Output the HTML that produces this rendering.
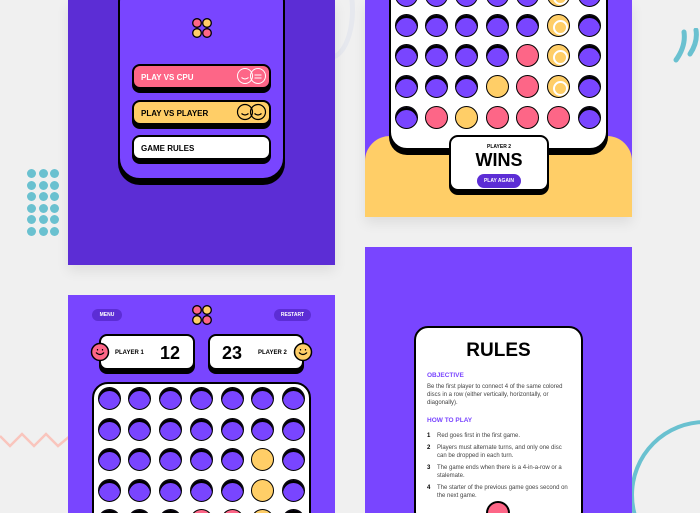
<!DOCTYPE html>
<html style="width:700px;height:513px;overflow:hidden"><head><meta charset="utf-8"><style>
*{margin:0;padding:0;box-sizing:border-box}
body{width:700px;height:513px;overflow:hidden;background:#f0f0f0;position:relative;font-family:"Liberation Sans",sans-serif;font-weight:bold}
.a{position:absolute}
.h{position:absolute;width:23px;height:23px;border-radius:50%;background:#7945ff;border:1.5px solid #000;box-shadow:inset 0 3px 0 #000}
.r{background:#fd6687;box-shadow:none}
.y{background:#ffce67;box-shadow:none}
.w::after{content:"";position:absolute;left:4.5px;top:4.5px;width:11px;height:11px;border:2px solid #fff;border-radius:50%}
.btn{position:absolute;left:132px;width:139px;height:25px;border:2px solid #000;border-radius:8px;box-shadow:0 4px 0 #000;font-size:8px;padding:7px 0 0 7px}
.dot{position:absolute;width:9px;height:9px;border-radius:50%;background:#6ac1d0}
.pill{position:absolute;height:12px;border-radius:6px;background:#5c2dd5;color:#fff;font-size:5px;text-align:center;line-height:12px}
.card{position:absolute;height:36px;background:#fff;border:2px solid #000;border-radius:8px;box-shadow:0 4px 0 #000}
.rt{font-weight:normal;font-size:6px;color:#444;line-height:8px}
</style></head><body>
<div class="a" style="left:305px;top:-40px;width:50px;height:100px;border:5px solid #e6e8ee;border-radius:50%;border-left-color:transparent"></div>
<svg class="a" style="left:670px;top:28px" width="30" height="36"><path d="M14 4q2 14-8 28M26 2q2 12-6 24" fill="none" stroke="#6ac1d0" stroke-width="5" stroke-linecap="round"/></svg>
<div class="a" style="left:630px;top:420px;width:150px;height:150px;border:4px solid #6ac1d0;border-radius:50%"></div>
<svg class="a" style="left:0;top:430px" width="70" height="25"><polyline points="0,6 10,16 22,4 34,16 46,4 58,16 70,6" fill="none" stroke="#f9c5bd" stroke-width="2.5"/></svg>
<div class="dot" style="left:27px;top:169px"></div><div class="dot" style="left:39px;top:169px"></div><div class="dot" style="left:50px;top:169px"></div>
<div class="dot" style="left:27px;top:181px"></div><div class="dot" style="left:39px;top:181px"></div><div class="dot" style="left:50px;top:181px"></div>
<div class="dot" style="left:27px;top:192px"></div><div class="dot" style="left:39px;top:192px"></div><div class="dot" style="left:50px;top:192px"></div>
<div class="dot" style="left:27px;top:204px"></div><div class="dot" style="left:39px;top:204px"></div><div class="dot" style="left:50px;top:204px"></div>
<div class="dot" style="left:27px;top:215px"></div><div class="dot" style="left:39px;top:215px"></div><div class="dot" style="left:50px;top:215px"></div>
<div class="dot" style="left:27px;top:227px"></div><div class="dot" style="left:39px;top:227px"></div><div class="dot" style="left:50px;top:227px"></div>

<div class="a" style="left:68px;top:0;width:267px;height:265px;background:#5c2dd5;box-shadow:0 6px 12px rgba(0,0,0,.08)"></div>
<div class="a" style="left:118px;top:-20px;width:167px;height:200px;background:#7945ff;border:2.5px solid #000;border-radius:22px;box-shadow:0 5px 0 #000"></div>
<svg class="a" style="left:191px;top:17px" width="22" height="22"><g stroke="#000" stroke-width="1.3"><circle cx="6" cy="6" r="4.3" fill="#fd6687"/><circle cx="16" cy="6" r="4.3" fill="#ffce67"/><circle cx="6" cy="16" r="4.3" fill="#ffce67"/><circle cx="16" cy="16" r="4.3" fill="#fd6687"/></g></svg>
<div class="btn" style="top:64px;background:#fd6687;color:#fff">PLAY VS CPU</div>
<svg class="a" style="left:236px;top:67px" width="32" height="18"><g fill="none" stroke="#fff" stroke-width="1"><circle cx="9" cy="9" r="7.5"/><circle cx="22" cy="9" r="7.5"/><path d="M5.5 10.5q3.5 3 7 0M18.5 8h7M18.5 11h7"/></g></svg>
<div class="btn" style="top:100px;background:#ffce67;color:#000">PLAY VS PLAYER</div>
<svg class="a" style="left:236px;top:103px" width="32" height="18"><g fill="none" stroke="#000" stroke-width="1.2"><circle cx="9" cy="9" r="7.5"/><circle cx="22" cy="9" r="7.5"/><path d="M5.5 10.5q3.5 3 7 0M18.5 10.5q3.5 3 7 0"/></g></svg>
<div class="btn" style="top:135px;background:#fff;color:#000">GAME RULES</div>

<div class="a" style="left:365px;top:0;width:267px;height:217px;background:#7945ff;overflow:hidden;box-shadow:0 6px 12px rgba(0,0,0,.08)">
 <div class="a" style="left:0;top:136px;width:267px;height:100px;background:#ffce67;border-radius:25px 25px 0 0"></div>
</div>
<div class="a" style="left:389px;top:-20px;width:219px;height:170px;background:#fff;border:2.5px solid #000;border-radius:18px;box-shadow:0 5px 0 #000"></div>
<div class="h" style="left:395px;top:-16px"></div><div class="h" style="left:425px;top:-16px"></div><div class="h" style="left:455px;top:-16px"></div><div class="h" style="left:486px;top:-16px"></div><div class="h" style="left:516px;top:-16px"></div><div class="h y w" style="left:547px;top:-16px"></div><div class="h" style="left:578px;top:-16px"></div>
<div class="h" style="left:395px;top:14px"></div><div class="h" style="left:425px;top:14px"></div><div class="h" style="left:455px;top:14px"></div><div class="h" style="left:486px;top:14px"></div><div class="h" style="left:516px;top:14px"></div><div class="h y w" style="left:547px;top:14px"></div><div class="h" style="left:578px;top:14px"></div>
<div class="h" style="left:395px;top:44px"></div><div class="h" style="left:425px;top:44px"></div><div class="h" style="left:455px;top:44px"></div><div class="h" style="left:486px;top:44px"></div><div class="h r" style="left:516px;top:44px"></div><div class="h y w" style="left:547px;top:44px"></div><div class="h" style="left:578px;top:44px"></div>
<div class="h" style="left:395px;top:75px"></div><div class="h" style="left:425px;top:75px"></div><div class="h" style="left:455px;top:75px"></div><div class="h y" style="left:486px;top:75px"></div><div class="h r" style="left:516px;top:75px"></div><div class="h y w" style="left:547px;top:75px"></div><div class="h" style="left:578px;top:75px"></div>
<div class="h" style="left:395px;top:106px"></div><div class="h r" style="left:425px;top:106px"></div><div class="h y" style="left:455px;top:106px"></div><div class="h r" style="left:486px;top:106px"></div><div class="h r" style="left:516px;top:106px"></div><div class="h r" style="left:547px;top:106px"></div><div class="h" style="left:578px;top:106px"></div>
<div class="a" style="left:449px;top:135px;width:100px;height:56px;background:#fff;border:2px solid #000;border-radius:9px;box-shadow:0 4px 0 #000;text-align:center">
 <div style="font-size:5px;margin-top:7px">PLAYER 2</div>
 <div style="font-size:18px;line-height:18px;margin-top:1px">WINS</div>
 <div style="display:inline-block;background:#5c2dd5;color:#fff;font-size:5px;border-radius:7px;padding:4px 7px;margin-top:2px">PLAY AGAIN</div>
</div>

<div class="a" style="left:68px;top:295px;width:267px;height:218px;background:#7945ff"></div>
<div class="pill" style="left:92px;top:309px;width:30px">MENU</div>
<div class="pill" style="left:274px;top:309px;width:37px">RESTART</div>
<svg class="a" style="left:191px;top:304px" width="22" height="22"><g stroke="#000" stroke-width="1.3"><circle cx="6" cy="6" r="4.3" fill="#fd6687"/><circle cx="16" cy="6" r="4.3" fill="#ffce67"/><circle cx="6" cy="16" r="4.3" fill="#ffce67"/><circle cx="16" cy="16" r="4.3" fill="#fd6687"/></g></svg>
<div class="card" style="left:99px;top:334px;width:96px"><span class="a" style="left:14px;top:14px;font-size:6px">PLAYER 1</span><span class="a" style="left:59px;top:7px;font-size:18px">12</span></div>
<div class="card" style="left:208px;top:334px;width:96px"><span class="a" style="left:12px;top:7px;font-size:18px">23</span><span class="a" style="left:48px;top:14px;font-size:6px">PLAYER 2</span></div>
<svg class="a" style="left:90px;top:342px" width="20" height="20"><circle cx="10" cy="10" r="8.5" fill="#fd6687" stroke="#000" stroke-width="1.5"/><path d="M6 10.5q4 4 8 0M7.5 7v1.5M12.5 7v1.5" fill="none" stroke="#000" stroke-width="1.2"/></svg>
<svg class="a" style="left:293px;top:342px" width="20" height="20"><circle cx="10" cy="10" r="8.5" fill="#ffce67" stroke="#000" stroke-width="1.5"/><path d="M6 10.5q4 4 8 0M7.5 7v1.5M12.5 7v1.5" fill="none" stroke="#000" stroke-width="1.2"/></svg>
<div class="a" style="left:92px;top:382px;width:219px;height:160px;background:#fff;border:2.5px solid #000;border-radius:16px"></div>
<div class="h" style="left:98px;top:387px"></div><div class="h" style="left:128px;top:387px"></div><div class="h" style="left:159px;top:387px"></div><div class="h" style="left:190px;top:387px"></div><div class="h" style="left:221px;top:387px"></div><div class="h" style="left:251px;top:387px"></div><div class="h" style="left:282px;top:387px"></div>
<div class="h" style="left:98px;top:418px"></div><div class="h" style="left:128px;top:418px"></div><div class="h" style="left:159px;top:418px"></div><div class="h" style="left:190px;top:418px"></div><div class="h" style="left:221px;top:418px"></div><div class="h" style="left:251px;top:418px"></div><div class="h" style="left:282px;top:418px"></div>
<div class="h" style="left:98px;top:448px"></div><div class="h" style="left:128px;top:448px"></div><div class="h" style="left:159px;top:448px"></div><div class="h" style="left:190px;top:448px"></div><div class="h" style="left:221px;top:448px"></div><div class="h y" style="left:251px;top:448px"></div><div class="h" style="left:282px;top:448px"></div>
<div class="h" style="left:98px;top:479px"></div><div class="h" style="left:128px;top:479px"></div><div class="h" style="left:159px;top:479px"></div><div class="h" style="left:190px;top:479px"></div><div class="h" style="left:221px;top:479px"></div><div class="h y" style="left:251px;top:479px"></div><div class="h" style="left:282px;top:479px"></div>
<div class="h" style="left:98px;top:509px"></div><div class="h" style="left:128px;top:509px"></div><div class="h" style="left:159px;top:509px"></div><div class="h r" style="left:190px;top:509px"></div><div class="h r" style="left:221px;top:509px"></div><div class="h y" style="left:251px;top:509px"></div><div class="h" style="left:282px;top:509px"></div>

<div class="a" style="left:365px;top:247px;width:267px;height:266px;background:#7945ff"></div>
<div class="a" style="left:414px;top:326px;width:169px;height:200px;background:#fff;border:2.5px solid #000;border-radius:14px;padding:0 11px">
 <div style="text-align:center;font-size:19px;margin-top:12px">RULES</div>
 <div style="color:#7945ff;font-size:6.5px;margin-top:10px">OBJECTIVE</div>
 <div class="rt" style="margin-top:4px">Be the first player to connect 4 of the same colored discs in a row (either vertically, horizontally, or diagonally).</div>
 <div style="color:#7945ff;font-size:6.5px;margin-top:10px">HOW TO PLAY</div>
 <div class="rt" style="margin-top:8px;padding-left:10px;position:relative"><b class="a" style="left:0;color:#000">1</b>Red goes first in the first game.</div>
 <div class="rt" style="margin-top:4px;padding-left:10px;position:relative"><b class="a" style="left:0;color:#000">2</b>Players must alternate turns, and only one disc can be dropped in each turn.</div>
 <div class="rt" style="margin-top:4px;padding-left:10px;position:relative"><b class="a" style="left:0;color:#000">3</b>The game ends when there is a 4-in-a-row or a stalemate.</div>
 <div class="rt" style="margin-top:4px;padding-left:10px;position:relative"><b class="a" style="left:0;color:#000">4</b>The starter of the previous game goes second on the next game.</div>
</div>
<div class="a" style="left:486px;top:501px;width:24px;height:24px;border-radius:50%;background:#fd6687;border:2px solid #000"></div>
</body></html>
